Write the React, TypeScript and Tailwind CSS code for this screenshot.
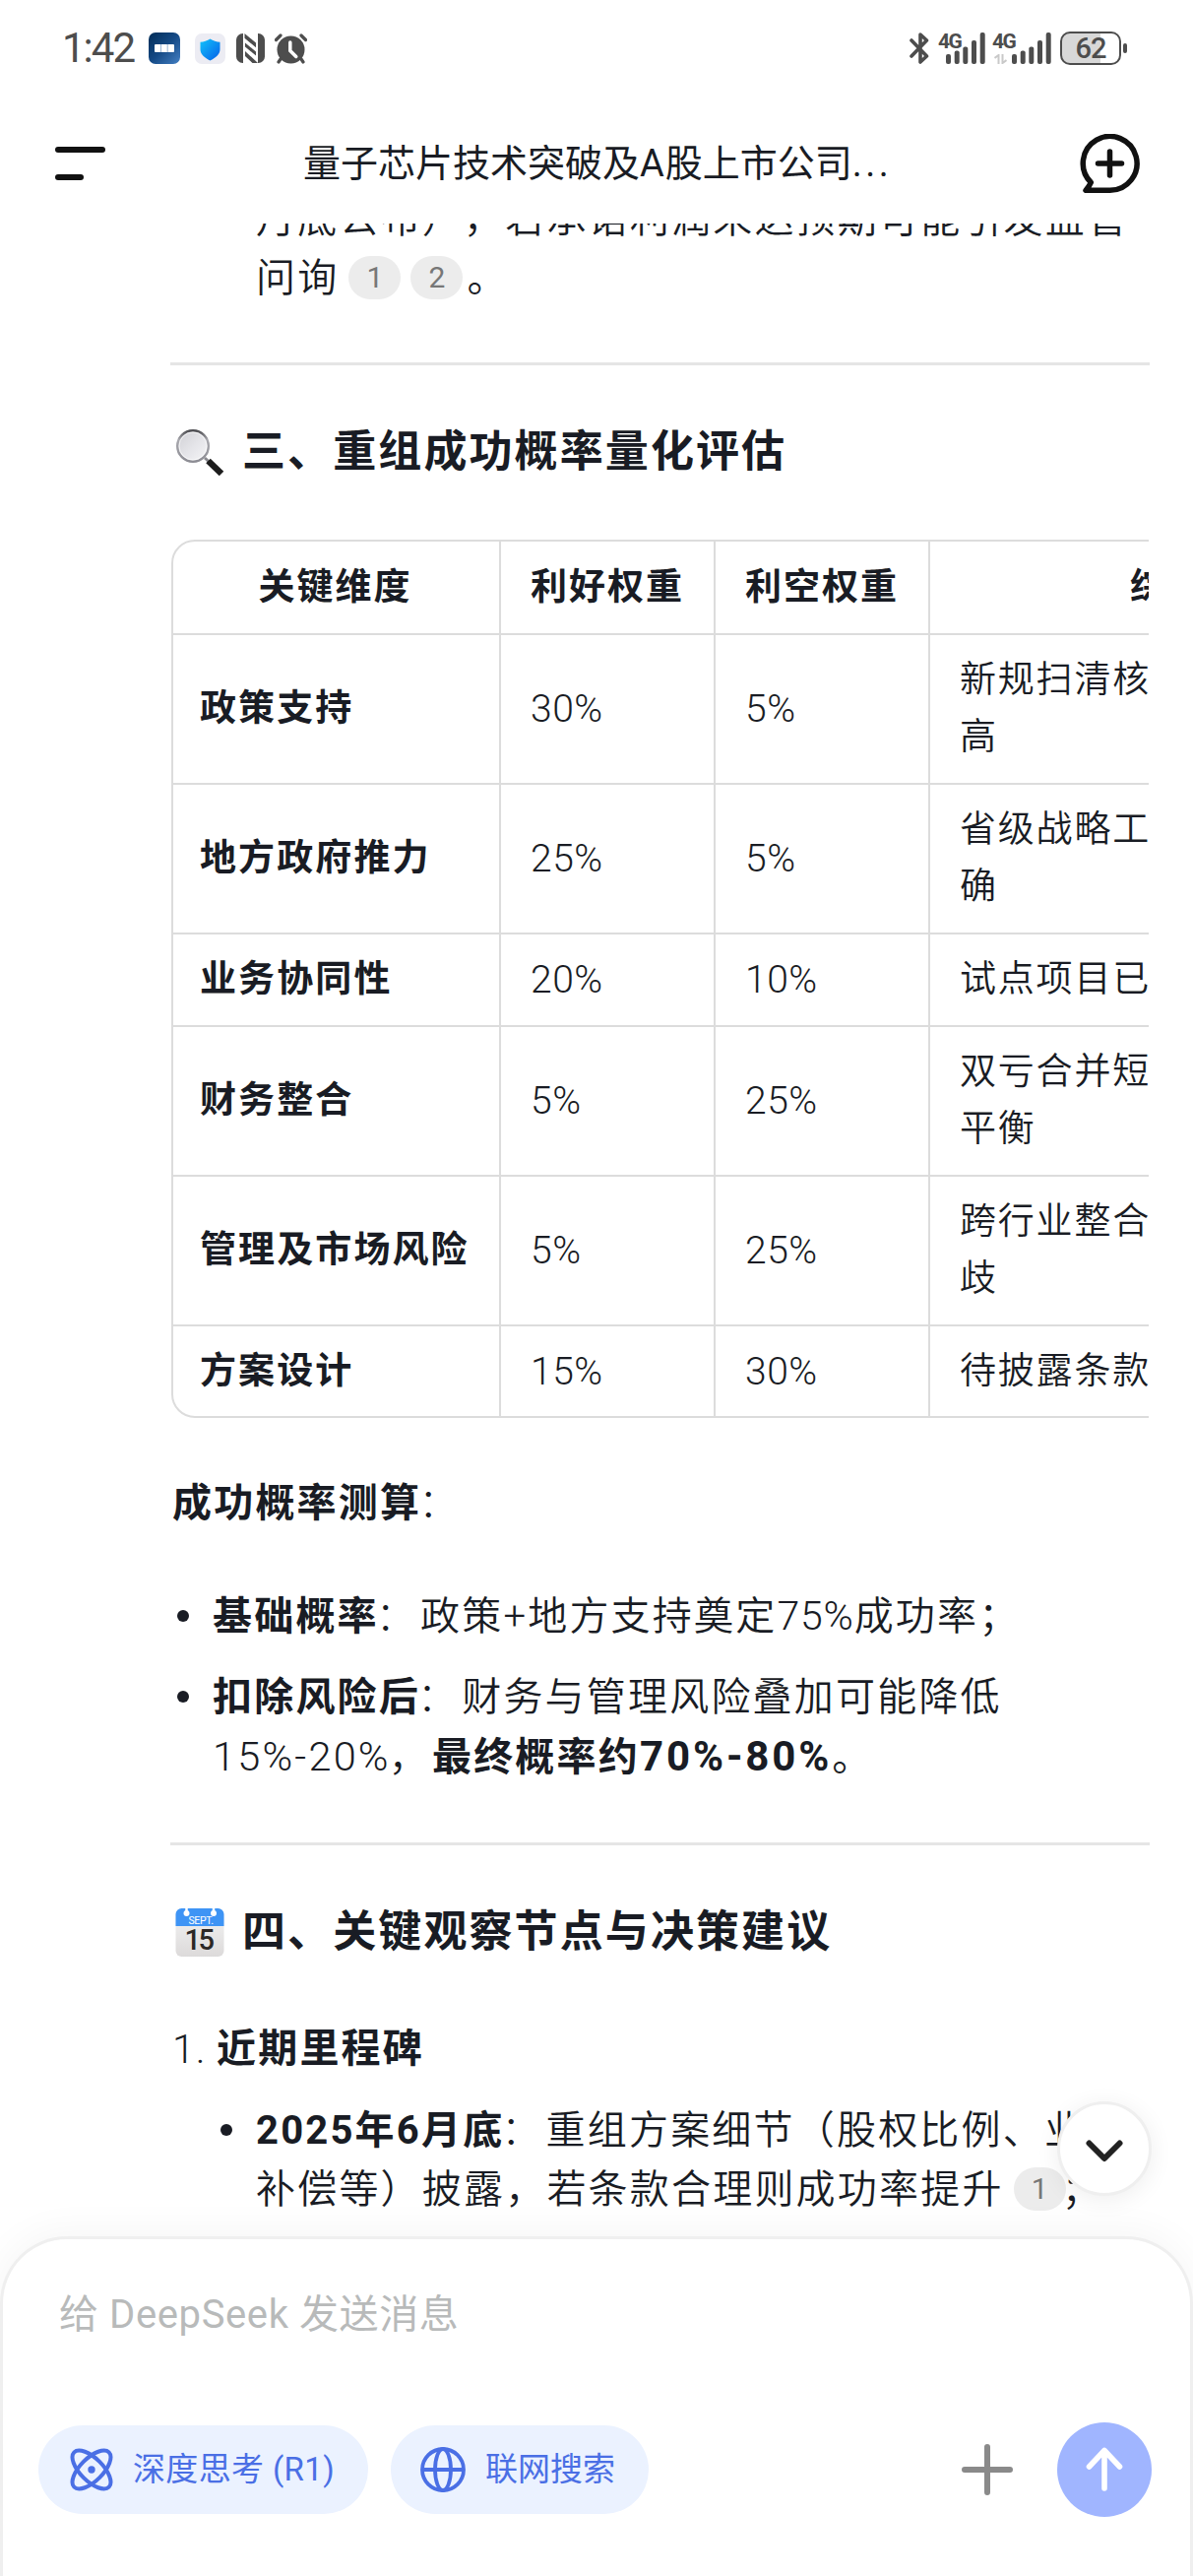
import type { ReactNode } from 'react';

type Row = { name: string; good: string; bad: string; note: string[] };

const rows: Row[] = [
  { name: '政策支持', good: '30%', bad: '5%', note: ['新规扫清核', '高'] },
  { name: '地方政府推力', good: '25%', bad: '5%', note: ['省级战略工', '确'] },
  { name: '业务协同性', good: '20%', bad: '10%', note: ['试点项目已'] },
  { name: '财务整合', good: '5%', bad: '25%', note: ['双亏合并短', '平衡'] },
  { name: '管理及市场风险', good: '5%', bad: '25%', note: ['跨行业整合', '歧'] },
  { name: '方案设计', good: '15%', bad: '30%', note: ['待披露条款'] },
];

function SignalBars() {
  return (
    <svg className="h-8 w-10" viewBox="0 0 40 32" fill="#4d4d4d">
      <rect x="0" y="22" width="5" height="10" rx="2" />
      <rect x="8.7" y="18.5" width="5" height="13.5" rx="2" />
      <rect x="17.3" y="14.5" width="5" height="17.5" rx="2" />
      <rect x="26" y="8" width="5" height="24" rx="2" />
      <rect x="34.7" y="0" width="5" height="32" rx="2" />
    </svg>
  );
}

function StatusBar() {
  return (
    <div className="flex h-[98px] shrink-0 items-center pl-[63px] pr-[67px] text-[#4d4d4d]">
      <span className="w-[88px] text-[42px] leading-none tracking-[-2px]">1:42</span>
      <svg className="h-8 w-8" viewBox="0 0 32 32">
        <defs>
          <linearGradient id="app" x1="0" y1="0" x2="1" y2="1">
            <stop offset="0" stopColor="#012c56" />
            <stop offset=".5" stopColor="#154a86" />
            <stop offset="1" stopColor="#4480c4" />
          </linearGradient>
        </defs>
        <rect width="32" height="32" rx="7" fill="url(#app)" />
        <rect x="6" y="12" width="20" height="8" rx="1" fill="#fff" />
        <path d="M12.5 12v8M19.2 12v8" stroke="#7fa3cc" strokeWidth=".8" />
      </svg>
      <svg className="ml-[15px] h-[31px] w-[31px]" viewBox="0 0 31 31">
        <defs>
          <linearGradient id="shield" x1="0" y1="0" x2="1" y2="1">
            <stop offset="0" stopColor="#13c3fb" />
            <stop offset="1" stopColor="#0560e8" />
          </linearGradient>
        </defs>
        <rect width="31" height="31" rx="7" fill="#ececf3" />
        <path d="M15.5 5.5c3 2 6.500 3 10 3.200v7.500c0 5-4.500 8.500-10 11.300-5.500-2.800-10-6.300-10-11.300V8.700c3.500-.2 7-1.200 10-3.200z" fill="url(#shield)" />
      </svg>
      <svg className="ml-[11px] h-[30px] w-[29px]" viewBox="0 0 29 30">
        <path d="M6.500 0H7v30h-.5A6.500 6.500 0 0 1 0 23.500v-17A6.500 6.500 0 0 1 6.500 0zM22 0h.5A6.500 6.500 0 0 1 29 6.500v17a6.500 6.500 0 0 1-6.500 6.500H22z" fill="#4d4d4d" />
        <path d="M8.500 0L20 9.500v4.800L8.500 4.800zM9 9.500l11 9v4L9 13.500zM9 18l13 12h-5.500L9 23z" fill="#4d4d4d" />
      </svg>
      <svg className="ml-[10px] h-[31px] w-[33px]" viewBox="0 0 33 31" fill="none" strokeLinecap="round">
        <circle cx="16.500" cy="16.500" r="14" fill="#4d4d4d" />
        <path d="M1.500 6.500L6 2M31.500 6.500L27 2M6 26l-2 3M27 26l2 3" stroke="#4d4d4d" strokeWidth="3.200" />
        <path d="M15.800 9v8.500l6 6" stroke="#fff" strokeWidth="3.500" />
      </svg>
      <div className="ml-auto flex items-center">
        <svg className="h-8 w-5" viewBox="0 0 20 32" fill="none" stroke="#4d4d4d" strokeWidth="3.600" strokeLinejoin="round" strokeLinecap="round">
          <path d="M2 8l15.500 16-6.500 6V2l6.500 6L2 24" />
        </svg>
        <div className="relative ml-[17px] h-8">
          <SignalBars />
          <span className="absolute -left-[8px] -top-[1px] text-[21px] font-bold leading-none tracking-[-1.500px]">4G</span>
        </div>
        <div className="relative ml-[27px] h-8">
          <SignalBars />
          <span className="absolute -left-[20px] -top-[1px] text-[21px] font-bold leading-none tracking-[-1.500px]">4G</span>
          <svg className="absolute -left-[18px] top-[22px] h-[10px] w-[13px]" viewBox="0 0 13 10" fill="none" stroke="#c9c9c9" strokeWidth="2">
            <path d="M0.500 4l4-3v9M12.500 6l-4 3V0" />
          </svg>
        </div>
        <div className="ml-[9px] flex h-[34px] w-[62px] items-center justify-center rounded-[10px] border-2 border-[#4d4d4d] bg-linear-to-r from-[#d8d8d8] from-[68%] to-white to-[68%] text-[29px] font-medium leading-none tracking-[-1px]">
          62
        </div>
        <div className="ml-[2px] h-[10px] w-1 rounded-full bg-[#4d4d4d]" />
      </div>
    </div>
  );
}

function Header() {
  return (
    <div className="flex h-[129px] shrink-0 items-start pl-[56px] pr-[53px] pt-[38px]">
      <div className="mt-[13px] flex w-[51px] flex-col gap-[22px]">
        <div className="h-[6px] w-[51px] rounded-full bg-[#111]" />
        <div className="h-[6px] w-[29px] rounded-full bg-[#111]" />
      </div>
      <h1 className="ml-[201px] text-[38px] leading-[60px] text-[#191c24]">
        量子芯片技术突破及<span className="tracking-[1px]">A</span>股上市公司
        <span className="tracking-[3.500px]">...</span>
      </h1>
      <svg className="ml-auto h-[62px] w-[64px]" viewBox="0 0 64 62" fill="none" stroke="#111" strokeWidth="5.500" strokeLinecap="round" strokeLinejoin="round">
        <path d="M8 57.300h24.500a27.400 27.400 0 1 0-19.200-8L11.300 53z" />
        <path d="M20.500 30h24M32.500 18v24" />
      </svg>
    </div>
  );
}

function Pill({ children }: { children: ReactNode }) {
  return (
    <span className="ml-[10px] inline-flex h-[44px] w-[53px] items-center justify-center rounded-full bg-[#ececec] align-[4px] text-[30px] font-normal leading-none tracking-normal text-[#777]">
      {children}
    </span>
  );
}

function Bullet({ children }: { children: ReactNode }) {
  return (
    <li className="flex">
      <span className="ml-[7px] mr-[24px] mt-[23px] size-[12px] shrink-0 rounded-full bg-[#191c24]" />
      <div className="whitespace-nowrap">{children}</div>
    </li>
  );
}

function Strong({ children }: { children: ReactNode }) {
  return <strong className="font-bold">{children}</strong>;
}

function Colon() {
  return <span className="-ml-[3px] mr-[3px] font-light">：</span>;
}

function Magnifier() {
  return (
    <svg className="size-[50px]" viewBox="0 0 50 50">
      <defs>
        <linearGradient id="lens" x1="0" y1="0" x2="1" y2="1">
          <stop offset="0" stopColor="#cfcfd4" />
          <stop offset=".5" stopColor="#e4e4e8" />
          <stop offset="1" stopColor="#f6f6f8" />
        </linearGradient>
        <linearGradient id="rim" x1="0" y1="0" x2="0" y2="1">
          <stop offset="0" stopColor="#4c4c50" />
          <stop offset=".3" stopColor="#a9a9af" />
          <stop offset="1" stopColor="#8d8d94" />
        </linearGradient>
      </defs>
      <path d="M30 31l5 4.500" stroke="#8a8a90" strokeWidth="3" />
      <path d="M33.500 34l13.500 13" stroke="#1d1d1d" strokeWidth="6.500" />
      <circle cx="18" cy="19" r="15.800" fill="url(#lens)" stroke="url(#rim)" strokeWidth="2.400" />
      <circle cx="18" cy="19" r="14" fill="none" stroke="#fff" strokeWidth="1" opacity=".7" />
    </svg>
  );
}

function Calendar() {
  return (
    <svg className="size-[50px]" viewBox="0 0 50 50">
      <defs>
        <linearGradient id="page" x1="0" y1="0" x2="0" y2="1">
          <stop offset="0" stopColor="#f5f5f5" />
          <stop offset="1" stopColor="#dcdada" />
        </linearGradient>
      </defs>
      <rect x=".5" y="1" width="49" height="49" rx="6" fill="url(#page)" />
      <path d="M.5 19V7a6 6 0 0 1 6-6h37a6 6 0 0 1 6 6v12z" fill="#3e94f5" />
      <path d="M11.500 1v5M39 1v5" stroke="#fff" strokeWidth="2.500" />
      <circle cx="11.500" cy="6" r="3" fill="#fff" />
      <circle cx="39" cy="6" r="3" fill="#fff" />
      <text x="26" y="17" textAnchor="middle" fontSize="10.500" fontWeight="400" fill="#fff" letterSpacing="-0.3">SEPT.</text>
      <text x="23.500" y="43" textAnchor="middle" fontSize="29" fontWeight="500" fill="#2b2826" letterSpacing="-2.500">15</text>
    </svg>
  );
}

function Heading({ icon, children }: { icon: ReactNode; children: ReactNode }) {
  return (
    <h2 className="mt-[56px] flex h-16 items-center gap-[18px] pl-[5px] text-[44px] font-bold leading-[64px] tracking-[2.100px]">
      {icon}
      <span>{children}</span>
    </h2>
  );
}

function Table() {
  return (
    <div className="ml-[1px] mr-[1px] mt-[57px] overflow-hidden text-[37px] leading-[58px] tracking-[1.800px]">
      <div className="w-[1335px] rounded-l-[24px] border-2 border-[#dcdcdc]">
        <div className="flex h-[93px] items-center font-bold tracking-[2px]">
          <div className="flex h-full w-[333px] items-center justify-center border-r-2 border-[#dcdcdc] pr-[2px]">关键维度</div>
          <div className="flex h-full w-[218px] items-center border-r-2 border-[#dcdcdc] pl-[30px]">利好权重</div>
          <div className="flex h-full w-[218px] items-center border-r-2 border-[#dcdcdc] pl-[30px]">利空权重</div>
          <div className="flex h-full flex-1 items-center justify-center">综合评估</div>
        </div>
        {rows.map((r, i) => (
          <div
            key={r.name}
            className={`flex border-t-2 border-[#dcdcdc] ${r.note.length > 1 ? 'h-[152px]' : i === 5 ? 'h-[93px]' : 'h-[94px]'}`}
          >
            <div className="flex w-[333px] items-center border-r-2 border-[#dcdcdc] pl-[27px] font-bold tracking-[2.100px]">{r.name}</div>
            <div className="flex w-[218px] items-center border-r-2 border-[#dcdcdc] pl-[30px] text-[39px] tracking-[0.500px]">{r.good}</div>
            <div className="flex w-[218px] items-center border-r-2 border-[#dcdcdc] pl-[30px] text-[39px] tracking-[0.500px]">{r.bad}</div>
            <div className="flex flex-col justify-center pl-[30px]">
              {r.note.map((n) => (
                <span key={n}>{n}</span>
              ))}
            </div>
          </div>
        ))}
      </div>
    </div>
  );
}

function Content() {
  return (
    <div className="min-h-0 flex-1 overflow-hidden pl-[173px] pr-[44px] text-[40px] font-[350] leading-[60px] tracking-[2.200px] text-[#191c24] [text-spacing-trim:space-all]">
      <div className="-mt-[34px] whitespace-nowrap pl-[87px]">
        月底公布），若承诺利润未达预期可能引发监管
        <br />
        问询
        <Pill>1</Pill>
        <Pill>2</Pill>
        <span className="ml-[4px]">。</span>
      </div>
      <div className="mt-[55px] h-[3px] bg-[#e5e5e5]" />
      <Heading icon={<Magnifier />}>三、重组成功概率量化评估</Heading>
      <Table />
      <p className="mt-[57px] pl-[2px]">
        <Strong>成功概率测算</Strong>
        <Colon />
      </p>
      <ul className="mt-[55px] flex flex-col gap-[22px]">
        <Bullet>
          <Strong>基础概率</Strong>
          <Colon />
          政策+地方支持奠定<span className="text-[41px] leading-none tracking-[0.800px]">75%</span>成功率；
        </Bullet>
        <Bullet>
          <Strong>扣除风险后</Strong>
          <Colon />
          财务与管理风险叠加可能降低
          <br />
          <span className="text-[41.500px] tracking-[2.200px]">15%-20%</span>
          <span className="-ml-[2px] mr-[2px]">，</span>
          <Strong>
            最终概率约<span className="text-[42px] tracking-[2.900px]">70%-80%</span>
          </Strong>
          。
        </Bullet>
      </ul>
      <div className="mt-[56px] h-[3px] bg-[#e5e5e5]" />
      <Heading icon={<Calendar />}>四、关键观察节点与决策建议</Heading>
      <p className="mt-[57px] flex pl-[2px]">
        <span className="w-[45px] text-[41px] tracking-[1px]">1.</span>
        <Strong>近期里程碑</Strong>
      </p>
      <ul className="mt-[23px] pl-[44px]">
        <Bullet>
          <Strong>2025年6月底</Strong>
          <Colon />
          重组方案细节（股权比例、业
          <br />
          补偿等）披露，若条款合理则成功率提升
          <Pill>1</Pill>
          <span className="-ml-[4px]">；</span>
        </Bullet>
      </ul>
    </div>
  );
}

function Composer() {
  return (
    <div className="relative h-[345px] shrink-0 rounded-t-[68px] border-x-[3px] border-t-[3px] border-[#efefef] bg-white px-[36px] shadow-[0_-4px_40px_rgba(0,0,0,0.045)]">
      <button className="absolute -top-[140px] right-[39px] flex size-[96px] items-center justify-center rounded-full border-[3px] border-[#efefef] bg-white shadow-[0_4px_24px_rgba(0,0,0,0.07)]">
        <svg className="mt-[6px] h-[24px] w-[38px]" viewBox="0 0 38 24" fill="none" stroke="#222" strokeWidth="6" strokeLinecap="round" strokeLinejoin="round">
          <path d="M3.500 3.500L19 19 34.500 3.500" />
        </svg>
      </button>
      <div className="pl-[21px] pt-[47px] text-[40px] leading-[60px] tracking-[0.600px] text-[#b8baba]">给 DeepSeek 发送消息</div>
      <div className="mt-[79px] flex h-[96px] items-center text-[33px] text-[#4a6fe5]">
        <div className="flex h-[90px] w-[335px] items-center rounded-full bg-[#ebf2ff] pl-[31px]">
          <svg className="h-[46px] w-[46px]" viewBox="0 0 46 46" fill="none" stroke="#4a6fe5" strokeWidth="4">
            <ellipse cx="23" cy="23" rx="11.500" ry="25" transform="rotate(45 23 23)" />
            <ellipse cx="23" cy="23" rx="11.500" ry="25" transform="rotate(-45 23 23)" />
            <circle cx="23" cy="23" r="3.700" fill="#4a6fe5" stroke="none" />
          </svg>
          <span className="ml-[19px] tracking-[0.350px]">深度思考 (R1)</span>
        </div>
        <div className="ml-[23px] flex h-[90px] w-[262px] items-center rounded-full bg-[#ebf2ff] pl-[30px]">
          <svg className="size-[46px]" viewBox="0 0 46 46" fill="none" stroke="#4a6fe5" strokeWidth="3.800">
            <circle cx="23" cy="23" r="21" />
            <ellipse cx="23" cy="23" rx="8" ry="21" />
            <path d="M2 23h42" />
          </svg>
          <span className="ml-[20px]">联网搜索</span>
        </div>
        <svg className="ml-auto size-[52px]" viewBox="0 0 52 52" stroke="#8a8a8a" strokeWidth="6" strokeLinecap="round">
          <path d="M3 26h46M26 3v46" />
        </svg>
        <div className="ml-[45px] mr-[3px] flex size-[96px] items-center justify-center rounded-full bg-[#a0b5ff]">
          <svg className="h-[46px] w-[38px]" viewBox="0 0 38 46" fill="none" stroke="#fff" strokeWidth="5.600" strokeLinecap="round" strokeLinejoin="round">
            <path d="M19 3.500V42M3.500 20L19 3.500 34.500 20" />
          </svg>
        </div>
      </div>
    </div>
  );
}

export default function App() {
  return (
    <div
      lang="zh-CN"
      className="flex h-[2616px] w-[1212px] flex-col overflow-hidden bg-white font-[Roboto,'Noto_Sans_CJK_SC',sans-serif]"
    >
      <StatusBar />
      <Header />
      <Content />
      <Composer />
    </div>
  );
}
